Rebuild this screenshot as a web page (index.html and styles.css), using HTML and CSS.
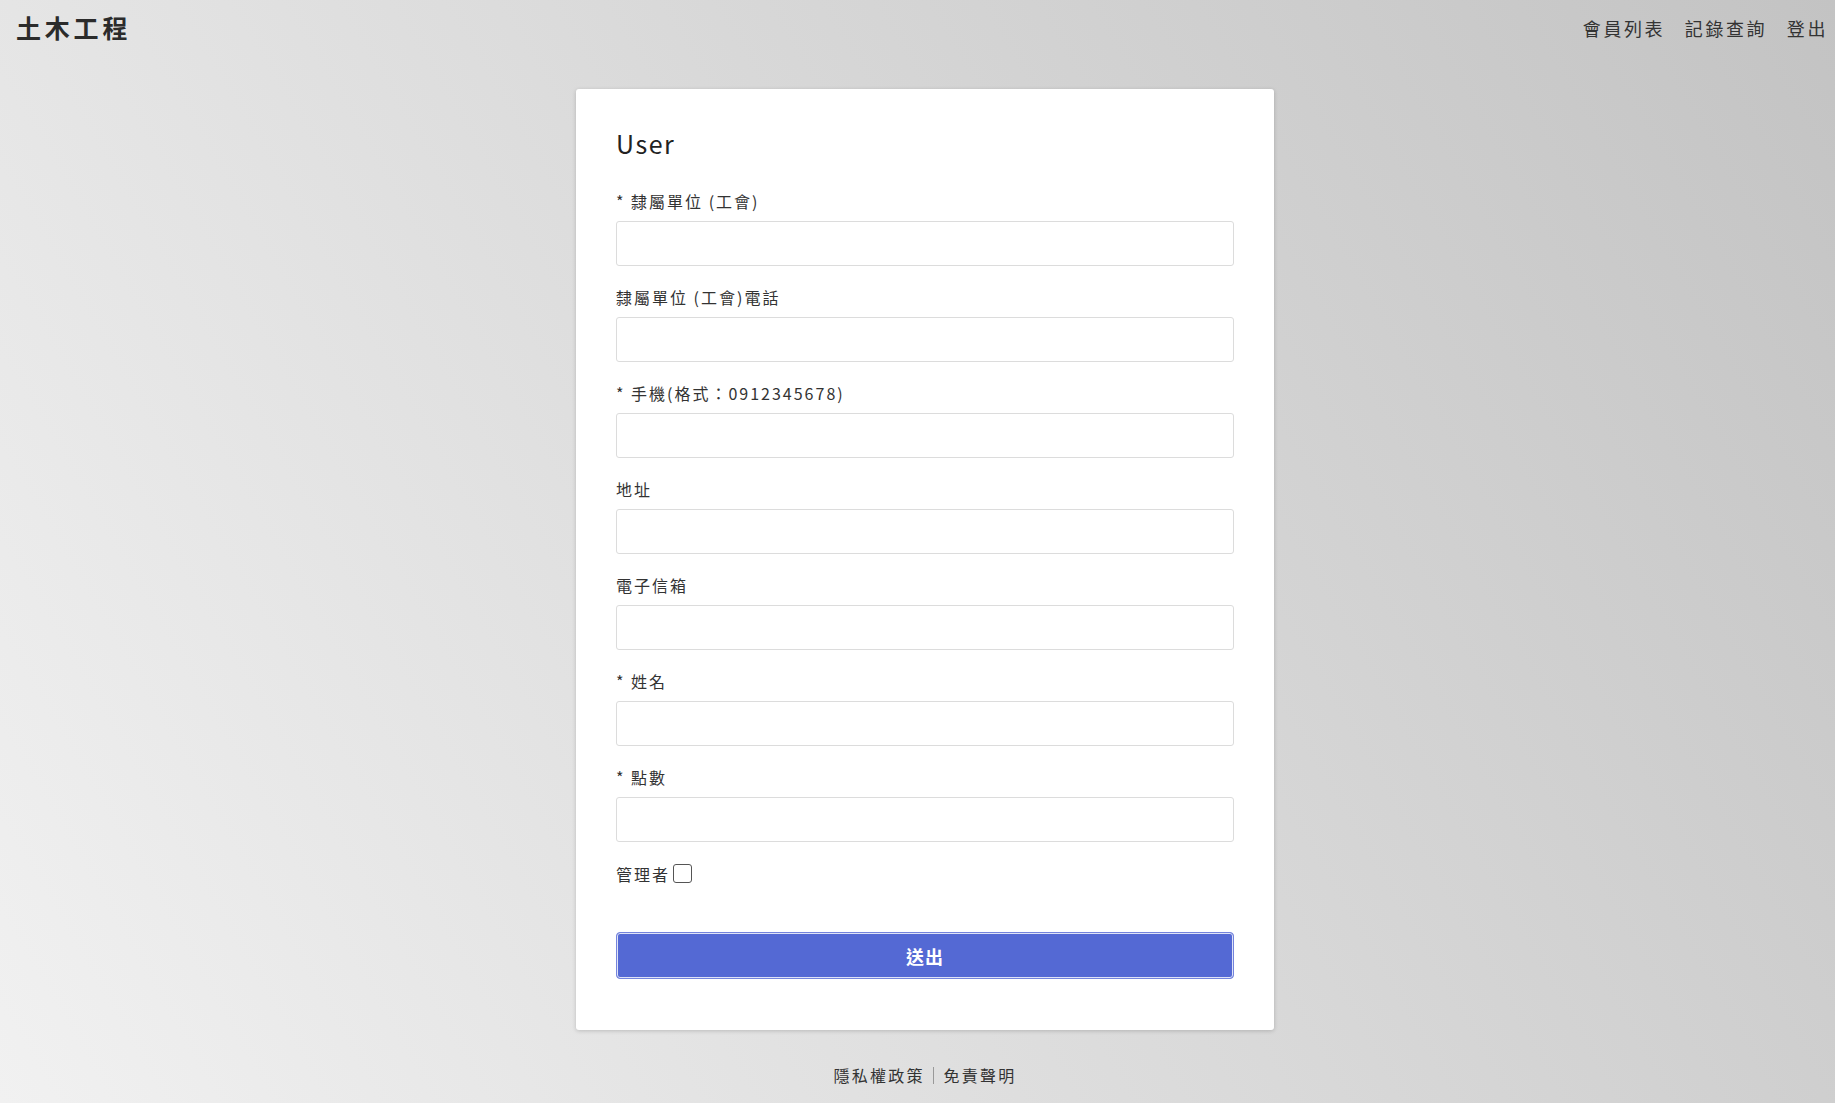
FILE: index.html
```html
<!DOCTYPE html>
<html lang="zh-Hant">
<head>
    <meta charset="UTF-8">
    <meta name="viewport" content="width=device-width, initial-scale=1.0">
    <title>土木工程 - User</title>
    <link rel="stylesheet" href="styles.css">
</head>
<body>
    <div class="header">
        <div class="brand">土木工程</div>
        <div class="menu">
            <a href="#">會員列表</a>
            <a href="#">記錄查詢</a>
            <a href="#">登出</a>
        </div>
    </div>

    <div class="main">
        <form class="card" id="userForm">
            <h2>User</h2>

            <label for="unit">* 隸屬單位 (工會)</label>
            <input type="text" id="unit" name="unit">

            <label for="unit_tel">隸屬單位 (工會)電話</label>
            <input type="text" id="unit_tel" name="unit_tel">

            <label for="mobile">* 手機(格式：0912345678)</label>
            <input type="text" id="mobile" name="mobile">

            <label for="address">地址</label>
            <input type="text" id="address" name="address">

            <label for="email">電子信箱</label>
            <input type="text" id="email" name="email">

            <label for="name">* 姓名</label>
            <input type="text" id="name" name="name">

            <label for="points">* 點數</label>
            <input type="text" id="points" name="points">

            <div class="check-row">
                <label for="admin">管理者</label>
                <input type="checkbox" id="admin" name="admin">
            </div>

            <button type="button">送出</button>
        </form>

        <div class="footer">
            <a href="#">隱私權政策</a><span class="sep"></span><a href="#">免責聲明</a>
        </div>
    </div>
</body>
</html>
```

FILE: styles.css
```css
html, body {
    margin: 0;
    min-height: 100%;
}

body {
    background: linear-gradient(60deg, #f1f1f1 0%, #c3c3c3 100%);
    min-height: 1103px;
    color: #333;
    font-family: "Noto Sans CJK TC", "Noto Sans", sans-serif;
}

.header {
    height: 56px;
    padding: 0 7px 0 16px;
    display: flex;
    align-items: center;
    justify-content: space-between;
}

.brand {
    font-size: 25px;
    font-weight: 700;
    letter-spacing: 3.8px;
    color: #2b2b2b;
    margin-top: -2px;
}

.menu a {
    color: #333;
    text-decoration: none;
    font-size: 18px;
    letter-spacing: 2.6px;
    margin-left: 16px;
    margin-top: -4px;
}

.main {
    padding-top: 33px;
    padding-left: 15px;
    display: flex;
    flex-direction: column;
    align-items: center;
}

.card {
    width: 618px;
    padding: 37px 40px 51px;
    background-color: white;
    border-radius: 3px;
    box-shadow: 0 1px 4px rgba(0, 0, 0, 0.18);
    display: flex;
    flex-direction: column;
}

.card h2 {
    margin: 0 0 29px;
    font-size: 25px;
    font-weight: 400;
    line-height: 34px;
    letter-spacing: 1.5px;
    color: #222;
}

.card label {
    font-size: 16px;
    line-height: 24px;
    letter-spacing: 2px;
    color: #333;
}

.card input[type="text"] {
    height: 45px;
    box-sizing: border-box;
    margin: 8px 0 19px;
    border: 1px solid #dcdcdc;
    border-radius: 3px;
    padding: 0 12px;
    font-size: 16px;
    font-family: inherit;
}

.check-row {
    display: flex;
    align-items: center;
    margin-top: 1px;
}

.check-row input {
    width: 19px;
    height: 19px;
    margin: 0 0 2px 3px;
    appearance: none;
    border: 1px solid #555;
    border-radius: 3px;
    background: white;
}

.card button {
    margin-top: 46px;
    height: 47px;
    background-color: #5469d4;
    color: white;
    border: 1px solid #7484dc;
    box-shadow: inset 0 0 0 1px #dfe3f7;
    border-radius: 4px;
    font-size: 18px;
    font-weight: 700;
    letter-spacing: 1px;
    font-family: inherit;
    cursor: pointer;
}

.footer {
    margin-top: 33px;
    display: flex;
    align-items: center;
    font-size: 16px;
    line-height: 24px;
}

.footer a {
    color: #333;
    text-decoration: none;
    letter-spacing: 2.2px;
}

.sep {
    width: 1px;
    height: 17px;
    background-color: #999;
    margin: 0 10px 0 8px;
}
```
